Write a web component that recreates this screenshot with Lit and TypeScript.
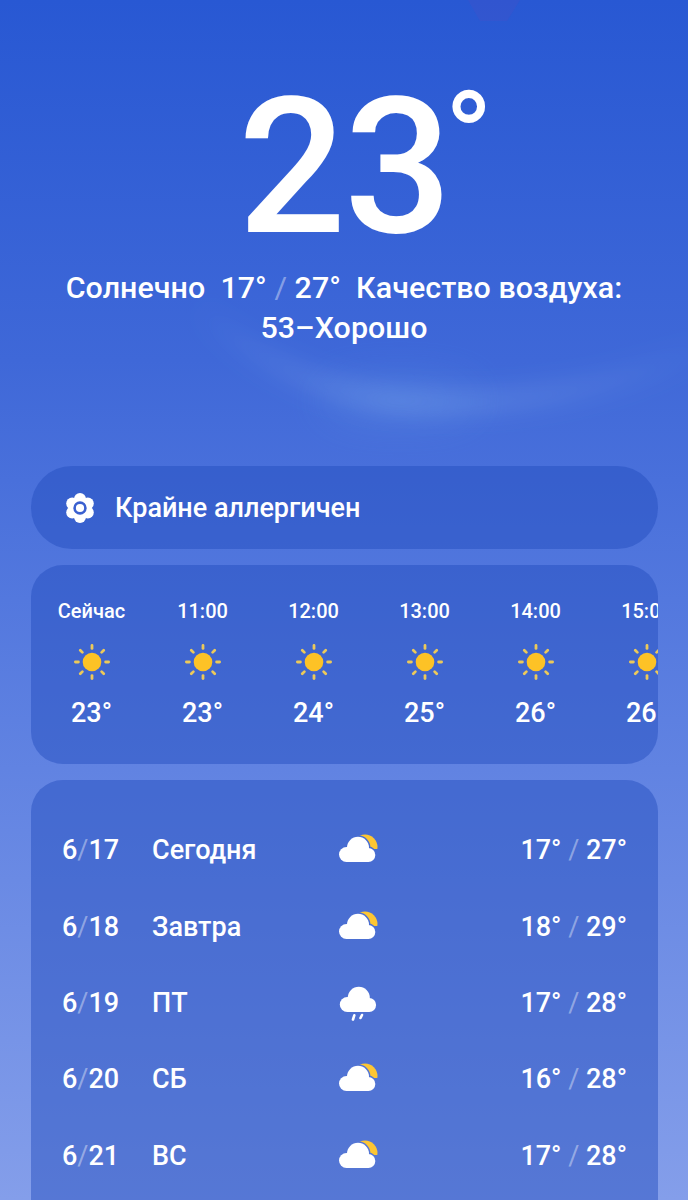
import { LitElement, html, css, svg } from 'lit';
import { customElement } from 'lit/decorators.js';

const sun = () => {
  const rays = [0, 45, 90, 135, 180, 225, 270, 315];
  return html`<svg class="sun" viewBox="0 0 36 36" width="36" height="36">
    ${rays.map(a => svg`<line x1="18" y1="1.400" x2="18" y2="4.400" transform="rotate(${a} 18 18)"
      stroke="#ecc95a" stroke-width="2.800" stroke-linecap="round"></line>`)}
    <circle cx="18" cy="18" r="9.300" fill="#fdc226"></circle>
  </svg>`;
};

// cloud body out of three lobes and a flat base
const cloudShape = () => svg`
  <circle cx="7.500" cy="22.500" r="7.500"></circle>
  <circle cx="19" cy="15.800" r="11"></circle>
  <circle cx="29.300" cy="23" r="7"></circle>
  <rect x="7.500" y="18" width="22" height="12"></rect>`;

const cloudSun = () => html`<svg viewBox="0 0 40 36" width="40" height="36">
  <defs>
    <mask id="cut" maskUnits="userSpaceOnUse" x="0" y="0" width="40" height="36">
      <rect width="40" height="36" fill="#fff"></rect>
      <g fill="#000" stroke="#000" stroke-width="3">${cloudShape()}</g>
      <rect y="17" width="40" height="19" fill="#000"></rect>
    </mask>
  </defs>
  <circle cx="26" cy="15" r="12.500" fill="#fdc633" mask="url(#cut)"></circle>
  <g fill="#fff">${cloudShape()}</g>
</svg>`;

const cloudRain = () => html`<svg viewBox="0 0 40 36" width="40" height="36">
  <g fill="#fff" transform="translate(0.800 -3)">${cloudShape()}</g>
  <path d="M15.300 30.300l-1.300 4.200M23 30l-1.500 3" stroke="#fff" stroke-width="2.600" stroke-linecap="round" fill="none"></path>
</svg>`;

const hours = [
  ['Сейчас', '23°'],
  ['11:00', '23°'],
  ['12:00', '24°'],
  ['13:00', '25°'],
  ['14:00', '26°'],
  ['15:00', '26°'],
];

const days = [
  ['6', '17', 'Сегодня', 'sun', '17°', '27°'],
  ['6', '18', 'Завтра', 'sun', '18°', '29°'],
  ['6', '19', 'ПТ', 'rain', '17°', '28°'],
  ['6', '20', 'СБ', 'sun', '16°', '28°'],
  ['6', '21', 'ВС', 'sun', '17°', '28°'],
];

@customElement('app-root')
export class AppRoot extends LitElement {
  static styles = css`
    :host {
      display: block;
      position: relative;
      width: 688px;
      height: 1200px;
      overflow: hidden;
      font-family: Roboto, "Noto Sans", sans-serif;
      color: #fff;
      background: linear-gradient(180deg, #2858d3 0%, #3f68d8 30%, #5d80e1 60%, #849eea 100%);
    }
    .glow {
      position: absolute;
      left: 0;
      top: 0;
      pointer-events: none;
    }
    .page {
      position: relative;
      display: flex;
      flex-direction: column;
      height: 100%;
    }
    .hero {
      height: 466px;
      box-sizing: border-box;
      text-align: center;
    }
    .temp {
      height: 268px;
      display: flex;
      justify-content: center;
      align-items: flex-start;
    }
    .digits {
      position: relative;
      margin-top: 72px;
      font-size: 190px;
      line-height: 190px;
      font-weight: 500;
      letter-spacing: -2px;
    }
    .degree {
      position: absolute;
      left: 100%;
      top: 28px;
      margin-left: -6px;
      font-size: 132px;
      line-height: 80px;
      font-weight: 400;
      letter-spacing: 0;
    }
    .summary {
      font-size: 30.400px;
      line-height: 40px;
      font-weight: 500;
      letter-spacing: 0.050px;
      padding: 0 50px;
      white-space: pre-wrap;
    }
    .slash {
      color: rgba(255, 255, 255, 0.4);
      font-weight: 400;
    }
    .panel {
      margin: 0 30px 16px 31px;
      background: rgba(36, 78, 190, 0.48);
    }
    .pill {
      height: 83px;
      border-radius: 41px;
      display: flex;
      align-items: center;
      gap: 21px;
      padding-left: 35px;
      font-size: 27px;
      font-weight: 500;
    }
    .hourly {
      height: 199px;
      border-radius: 32px;
      display: flex;
      overflow: hidden;
      padding-left: 5px;
    }
    .hour {
      flex: 0 0 111px;
      display: flex;
      flex-direction: column;
      align-items: center;
      padding-top: 33px;
    }
    .hour .time {
      font-size: 20px;
      line-height: 26px;
      font-weight: 500;
    }
    .hour .sun {
      margin-top: 20px;
    }
    .hour .deg {
      margin-top: 15px;
      font-size: 27px;
      line-height: 36px;
      font-weight: 500;
    }
    .daily {
      flex: 1;
      margin-bottom: 0;
      border-radius: 32px 32px 0 0;
      padding-top: 32px;
    }
    .day {
      height: 76.400px;
      display: flex;
      align-items: center;
      padding: 0 31px;
      font-size: 27px;
      font-weight: 500;
    }
    .date {
      width: 90px;
    }
    .name {
      width: 187px;
    }
    .icon {
      width: 40px;
      height: 36px;
      display: flex;
    }
    .range {
      margin-left: auto;
    }
  `;

  render() {
    return html`
      <svg class="glow" width="688" height="520" viewBox="0 0 688 520">
        <defs>
          <filter id="b" filterUnits="userSpaceOnUse" x="0" y="150" width="688" height="370"><feGaussianBlur stdDeviation="12"></feGaussianBlur></filter>
          <filter id="b2" filterUnits="userSpaceOnUse" x="0" y="150" width="688" height="370"><feGaussianBlur stdDeviation="24"></feGaussianBlur></filter>
          <linearGradient id="fade" gradientUnits="userSpaceOnUse" x1="190" x2="688" y1="0" y2="0">
            <stop offset="0" stop-color="#8fb8f0" stop-opacity="0"></stop>
            <stop offset="0.42" stop-color="#8fb8f0" stop-opacity="0.42"></stop>
            <stop offset="1" stop-color="#8fb8f0" stop-opacity="0.05"></stop>
          </linearGradient>
        </defs>
        <path d="M200 310C260 365 330 395 400 401 490 408 600 395 700 350" fill="none" stroke="url(#fade)" stroke-width="16" filter="url(#b)"></path>
        <ellipse cx="400" cy="400" rx="80" ry="16" fill="#6fa6ea" opacity="0.28" filter="url(#b2)"></ellipse>
        <path d="M468 0h52l-13 21h-27z" fill="#4a50c8" opacity="0.3"></path>
      </svg>
      <div class="page">
        <section class="hero">
          <div class="temp"><div class="digits">23<span class="degree">°</span></div></div>
          <div class="summary">Солнечно  17° <span class="slash">/</span> 27°  Качество воздуха: 53–Хорошо</div>
        </section>
        <div class="panel pill">
          <svg width="28" height="30" viewBox="0 0 28 30">
            <g fill="#fff">
              <circle cx="14" cy="6" r="6"></circle>
              <circle cx="14" cy="24" r="6"></circle>
              <circle cx="6.200" cy="10.500" r="6"></circle>
              <circle cx="21.800" cy="10.500" r="6"></circle>
              <circle cx="6.200" cy="19.500" r="6"></circle>
              <circle cx="21.800" cy="19.500" r="6"></circle>
              <circle cx="14" cy="15" r="8"></circle>
            </g>
            <circle cx="14" cy="15" r="5.400" fill="#fff" stroke="#3a60d0" stroke-width="2.600"></circle>
          </svg>
          <span>Крайне аллергичен</span>
        </div>
        <div class="panel hourly">
          ${hours.map(h => html`<div class="hour">
            <div class="time">${h[0]}</div>
            ${sun()}
            <div class="deg">${h[1]}</div>
          </div>`)}
        </div>
        <div class="panel daily">
          ${days.map(d => html`<div class="day">
            <div class="date">${d[0]}<span class="slash">/</span>${d[1]}</div>
            <div class="name">${d[2]}</div>
            <div class="icon">${d[3] === 'rain' ? cloudRain() : cloudSun()}</div>
            <div class="range">${d[4]} <span class="slash">/</span> ${d[5]}</div>
          </div>`)}
        </div>
      </div>
    `;
  }
}
